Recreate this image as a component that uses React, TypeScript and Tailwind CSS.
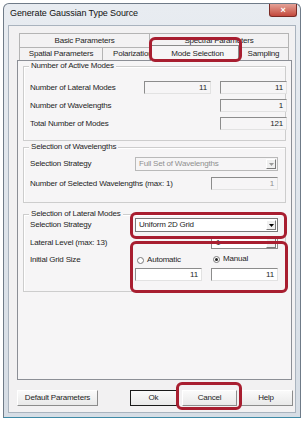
import React from "react";

function Arrow({ color }: { color: string }) {
  return (
    <svg width="5" height="3" viewBox="0 0 5 3">
      <polygon points="0,0 5,0 2.5,3" fill={color} />
    </svg>
  );
}

function DropBtn({ disabled }: { disabled?: boolean }) {
  return (
    <div className="w-[10px] h-[10px] flex items-center justify-center bg-[#f0f0f0] border border-t-white border-l-white border-b-[#7a7a7a] border-r-[#7a7a7a]">
      <Arrow color={disabled ? "#9a9a9a" : "#000"} />
    </div>
  );
}

function Field({ value, white }: { value: string; white?: boolean }) {
  return (
    <div
      className={`w-[67px] h-[13px] flex items-center justify-end pr-[3px] leading-none border border-t-[#8c8c8c] border-l-[#8c8c8c] border-b-[#e2e2e2] border-r-[#e2e2e2] ${
        white ? "bg-white" : "bg-[#f6f5f6]"
      }`}
    >
      {value}
    </div>
  );
}

function Group({
  title,
  className,
  children,
}: {
  title: string;
  className: string;
  children: React.ReactNode;
}) {
  return (
    <div className={`mx-[5px] border border-[#cdcdcd] shadow-[inset_1px_1px_0_#ffffff] ${className}`}>
      <div className="-mt-[6px] ml-[5px] px-[2px] w-fit bg-[#f6f5f6] leading-[10px]">{title}</div>
      {children}
    </div>
  );
}

function Radio({ checked, label }: { checked?: boolean; label: string }) {
  return (
    <div className="flex items-center gap-[3px] h-[10px]">
      <div className="w-[7px] h-[7px] rounded-full border border-[#7a7a7a] bg-white flex items-center justify-center">
        {checked && <div className="w-[3px] h-[3px] rounded-full bg-[#222]" />}
      </div>
      <span className="leading-none">{label}</span>
    </div>
  );
}

function Btn({ label, w, def }: { label: string; w: string; def?: boolean }) {
  return (
    <div
      className={`${w} h-[16px] flex items-center justify-center leading-none bg-gradient-to-b from-[#fafafa] to-[#e9e9e9] ${
        def
          ? "border border-[#1a1a1a]"
          : "border border-t-white border-l-white border-b-[#8c8c8c] border-r-[#8c8c8c]"
      }`}
    >
      {label}
    </div>
  );
}

export default function App() {
  return (
    <div className="relative w-[308px] h-[423px] bg-white pt-[3px] pl-[3px] text-[8px] tracking-[-0.2px] text-[#1e1e1e] font-['Liberation_Sans',Arial,sans-serif] overflow-hidden">
      {/* window */}
      <div className="w-[298px] h-[415px] rounded-t-[6px] border border-[#6f7b88] border-b-[#3f8aa6] bg-gradient-to-b from-[#e8ecf1] to-[#d6dde5] flex flex-col">
        {/* title bar */}
        <div className="h-[21px] flex items-start justify-between pl-[6px] pr-[3px]">
          <div className="mt-[3px] leading-[12px] text-[9px] tracking-[-0.1px] text-[#111]">
            Generate Gaussian Type Source
          </div>
          <div className="w-[28px] h-[13px] rounded-b-[3px] border border-t-0 border-[#7a2b25] bg-gradient-to-b from-[#e4a197] to-[#c2473c] flex items-center justify-center text-white text-[9px] font-bold leading-none">
            ×
          </div>
        </div>
        {/* client */}
        <div className="flex-1 mx-[4px] mb-[4px] bg-[#f2f1f2] border border-[#a9b3be] flex flex-col">
          {/* tabs */}
          <div className="mt-[7px] ml-[10px] flex flex-col">
            <div className="flex h-[14px]">
              <div className="w-[131px] h-[14px] flex items-center justify-center border border-b-0 border-[#b4b4b4] bg-[#f3f2f3]">
                Basic Parameters
              </div>
              <div className="w-[139px] h-[14px] flex items-center justify-center border border-b-0 border-l-0 border-[#b4b4b4] bg-[#f3f2f3]">
                Spectral Parameters
              </div>
            </div>
            <div className="flex h-[13px] items-end">
              <div className="w-[84px] h-[13px] flex items-center justify-center border border-b-0 border-[#b4b4b4] bg-[#f3f2f3]">
                Spatial Parameters
              </div>
              <div className="w-[47px] h-[13px] flex items-center justify-start pl-[10px] border border-b-0 border-l-0 border-[#b4b4b4] bg-[#f3f2f3] whitespace-nowrap">
                Polarization
              </div>
              <div className="relative top-[1px] z-10 w-[89px] h-[16px] flex items-center justify-center pl-[6px] border border-b-0 border-[#8a8a8a] bg-[#f6f5f6]">
                Mode Selection
              </div>
              <div className="w-[50px] h-[13px] flex items-center justify-center border border-b-0 border-l-0 border-[#b4b4b4] bg-[#f3f2f3]">
                Sampling
              </div>
            </div>
          </div>
          {/* tab panel */}
          <div className="ml-[8px] w-[275px] h-[320px] border border-[#8c8f96] bg-[#f6f5f6] flex flex-col">
            <Group title="Number of Active Modes" className="mt-[5px] h-[75px]">
              <div className="mt-[10px] pl-[6px] grid grid-cols-[105px_67px_67px] gap-x-[9px] gap-y-[5px] items-center">
                <span className="leading-none">Number of Lateral Modes</span>
                <Field value="11" />
                <Field value="11" />
                <span className="leading-none">Number of Wavelengths</span>
                <div />
                <Field value="1" />
                <span className="leading-none">Total Number of Modes</span>
                <div />
                <Field value="121" />
              </div>
            </Group>

            <Group title="Selection of Wavelengths" className="mt-[6px] h-[56px]">
              <div className="mt-[5px] pl-[6px] flex items-center">
                <span className="w-[105px] leading-none">Selection Strategy</span>
                <div className="w-[143px] h-[14px] flex items-center justify-between pl-[3px] pr-[1px] border border-[#b9b9b9] bg-[#f6f5f6] text-[#8f8f8f]">
                  <span className="leading-none">Full Set of Wavelengths</span>
                  <DropBtn disabled />
                </div>
              </div>
              <div className="mt-[6px] pl-[6px] flex items-center">
                <span className="w-[181px] leading-none">Number of Selected Wavelengths (max: 1)</span>
                <div className="w-[67px] h-[13px] flex items-center justify-end pr-[3px] leading-none border border-t-[#8c8c8c] border-l-[#8c8c8c] border-b-[#e2e2e2] border-r-[#e2e2e2] bg-[#f6f5f6] text-[#8f8f8f]">
                  1
                </div>
              </div>
            </Group>

            <Group title="Selection of Lateral Modes" className="mt-[11px] h-[78px]">
              <div className="-mt-[1px] pl-[6px] flex items-center">
                <span className="w-[105px] leading-none">Selection Strategy</span>
                <div className="w-[143px] h-[14px] flex items-center justify-between pl-[3px] pr-[1px] border border-[#7a7a7a] bg-white">
                  <span className="leading-none">Uniform 2D Grid</span>
                  <DropBtn />
                </div>
              </div>
              <div className="mt-[4px] pl-[6px] flex items-center">
                <span className="w-[181px] leading-none">Lateral Level (max: 13)</span>
                <div className="w-[67px] h-[13px] flex items-center justify-between pl-[4px] pr-[1px] leading-none border border-[#8c8c8c] bg-white">
                  <span>1</span>
                  <DropBtn />
                </div>
              </div>
              <div className="mt-[6px] pl-[6px] flex items-center">
                <span className="w-[107px] leading-none">Initial Grid Size</span>
                <div className="w-[76px]">
                  <Radio label="Automatic" />
                </div>
                <div className="-mt-[2px]">
                  <Radio label="Manual" checked />
                </div>
              </div>
              <div className="mt-[3px] pl-[6px] flex items-center">
                <div className="w-[105px]" />
                <Field value="11" white />
                <div className="w-[9px]" />
                <Field value="11" white />
              </div>
            </Group>
          </div>
          {/* buttons */}
          <div className="mt-[10px] ml-[8px] flex items-center">
            <Btn label="Default Parameters" w="w-[81px]" />
            <div className="ml-[32px]">
              <Btn label="Ok" w="w-[47px]" def />
            </div>
            <div className="ml-[5px]">
              <Btn label="Cancel" w="w-[55px]" />
            </div>
            <div className="ml-[2px]">
              <Btn label="Help" w="w-[54px]" />
            </div>
          </div>
        </div>
      </div>

      {/* red highlight overlays */}
      <div className="absolute left-[149px] top-[37px] w-[93px] h-[25px] border-[3px] border-[#a81e30] rounded-[6px] z-20" />
      <div className="absolute left-[130px] top-[212px] w-[157px] h-[27px] border-[3px] border-[#a81e30] rounded-[6px] z-20" />
      <div className="absolute left-[130px] top-[241px] w-[158px] h-[52px] border-[3px] border-[#a81e30] rounded-[6px] z-20" />
      <div className="absolute left-[176px] top-[382px] w-[66px] h-[28px] border-[3px] border-[#a81e30] rounded-[6px] z-20" />
    </div>
  );
}
